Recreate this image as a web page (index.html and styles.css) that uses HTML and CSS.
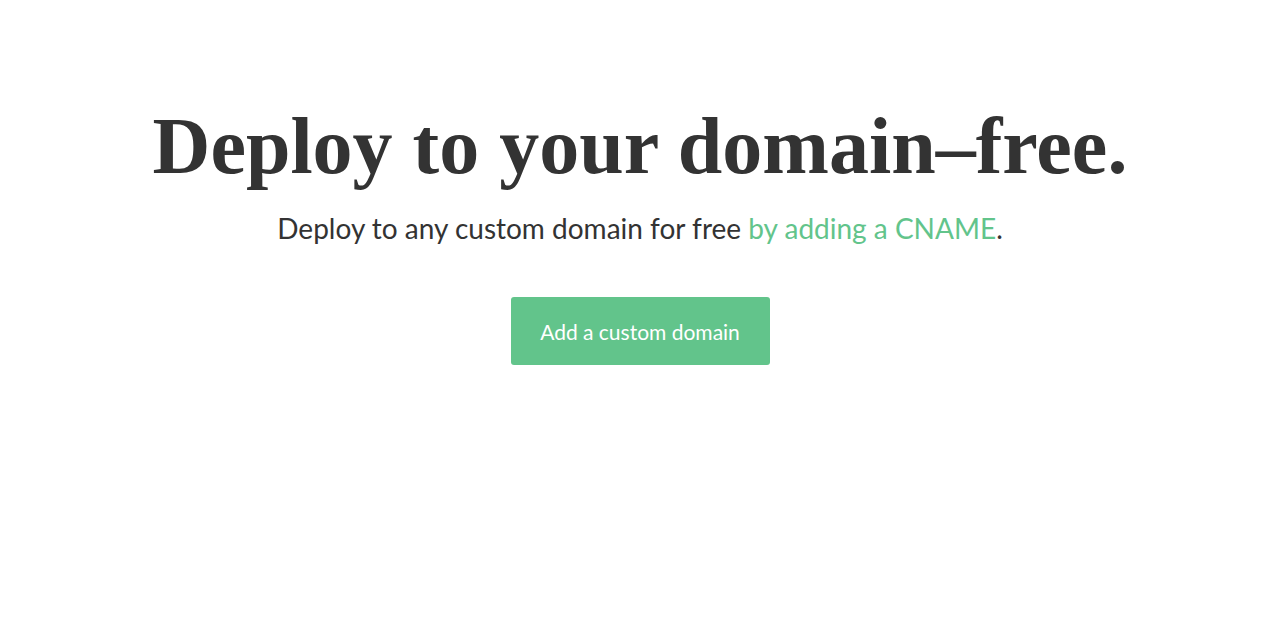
FILE: index.html
```html
<!DOCTYPE html>
<html>
<head>
<meta charset="utf-8">
<link rel="stylesheet" href="styles.css">
</head>
<body>
<main class="hero">
  <h1 class="title">Deploy to your domain–free.</h1>
  <p class="subtitle">Deploy to any custom domain for free <a class="link" href="#">by adding a CNAME</a>.</p>
  <a class="btn" href="#">Add a custom domain</a>
</main>
</body>
</html>
```
FILE: styles.css
```css
html, body {
  margin: 0;
  padding: 0;
  background: #ffffff;
}
.hero {
  display: flex;
  flex-direction: column;
  align-items: center;
  padding-top: 98px;
  color: #333333;
}
.title {
  margin: 0;
  font-family: "Liberation Serif", "Times New Roman", serif;
  font-weight: bold;
  font-size: 80px;
  line-height: 96px;
  color: #333333;
}
.subtitle {
  margin: 16px 0 0 0;
  font-family: Lato, "Open Sans", sans-serif;
  font-size: 28px;
  line-height: 36px;
  color: #333333;
}
.link {
  color: #62c48b;
  text-decoration: none;
}
.btn {
  margin-top: 51px;
  display: flex;
  align-items: center;
  justify-content: center;
  width: 259px;
  height: 68px;
  background: #62c48b;
  border-radius: 3px;
  color: #ffffff;
  text-decoration: none;
  font-family: Lato, "Open Sans", sans-serif;
  font-size: 21px;
}
```
